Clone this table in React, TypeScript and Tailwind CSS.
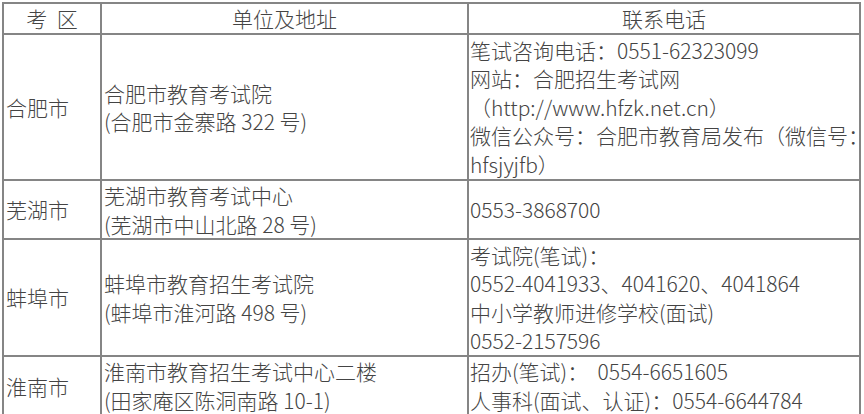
import React from "react";

type Row = {
  area: string;
  unit: string[];
  phone: string[];
  h: string;
  top?: boolean;
};

const rows: Row[] = [
  {
    area: "合肥市",
    unit: ["合肥市教育考试院", "(合肥市金寨路 322 号)"],
    phone: [
      "笔试咨询电话：0551-62323099",
      "网站：合肥招生考试网",
      "（http://www.hfzk.net.cn）",
      "微信公众号：合肥市教育局发布（微信号：",
      "hfsjyjfb）",
    ],
    h: "h-[146px]",
  },
  {
    area: "芜湖市",
    unit: ["芜湖市教育考试中心", "(芜湖市中山北路 28 号)"],
    phone: ["0553-3868700"],
    h: "h-[59px]",
  },
  {
    area: "蚌埠市",
    unit: ["蚌埠市教育招生考试院", "(蚌埠市淮河路 498 号)"],
    phone: [
      "考试院(笔试)：",
      "0552-4041933、4041620、4041864",
      "中小学教师进修学校(面试)",
      "0552-2157596",
    ],
    h: "h-[117px]",
  },
  {
    area: "淮南市",
    unit: ["淮南市教育招生考试中心二楼", "(田家庵区陈洞南路 10-1)"],
    phone: ["招办(笔试)：  0554-6651605", "人事科(面试、认证)：0554-6644784"],
    h: "h-[60px]",
    top: true,
  },
];

export default function App() {
  return (
    <div className="w-[864px] h-[414px] overflow-hidden bg-white pt-[2px] pl-[2px]">
      <table
        className="border-collapse text-[21px] leading-[28.5px] text-[#444] table-fixed w-[857px]"
        style={{ fontFamily: '"Noto Sans CJK SC", "Noto Sans", sans-serif', fontWeight: 300 }}
      >
        <colgroup>
          <col className="w-[98px]" />
          <col className="w-[367px]" />
          <col className="w-[392px]" />
        </colgroup>
        <thead>
          <tr className="h-[31px]">
            <th className="border-2 border-[#858585] font-light text-center p-0 whitespace-pre">考  区</th>
            <th className="border-2 border-[#858585] font-light text-center p-0">单位及地址</th>
            <th className="border-2 border-[#858585] font-light text-center p-0">联系电话</th>
          </tr>
        </thead>
        <tbody>
          {rows.map((r) => (
            <tr key={r.area} className={r.h}>
              <td className="border-2 border-[#858585] align-middle p-0 pl-[2px] whitespace-nowrap">{r.area}</td>
              <td className={`border-2 border-[#858585] p-0 pl-[2px] ${r.top ? "align-top" : "align-middle"}`}>
                {r.unit.map((u) => (
                  <div key={u} className="whitespace-pre">{u}</div>
                ))}
              </td>
              <td className={`border-2 border-[#858585] p-0 pl-[1px] ${r.top ? "align-top" : "align-middle"}`}>
                {r.phone.map((p) => (
                  <div key={p} className="whitespace-pre">{p}</div>
                ))}
              </td>
            </tr>
          ))}
        </tbody>
      </table>
    </div>
  );
}
